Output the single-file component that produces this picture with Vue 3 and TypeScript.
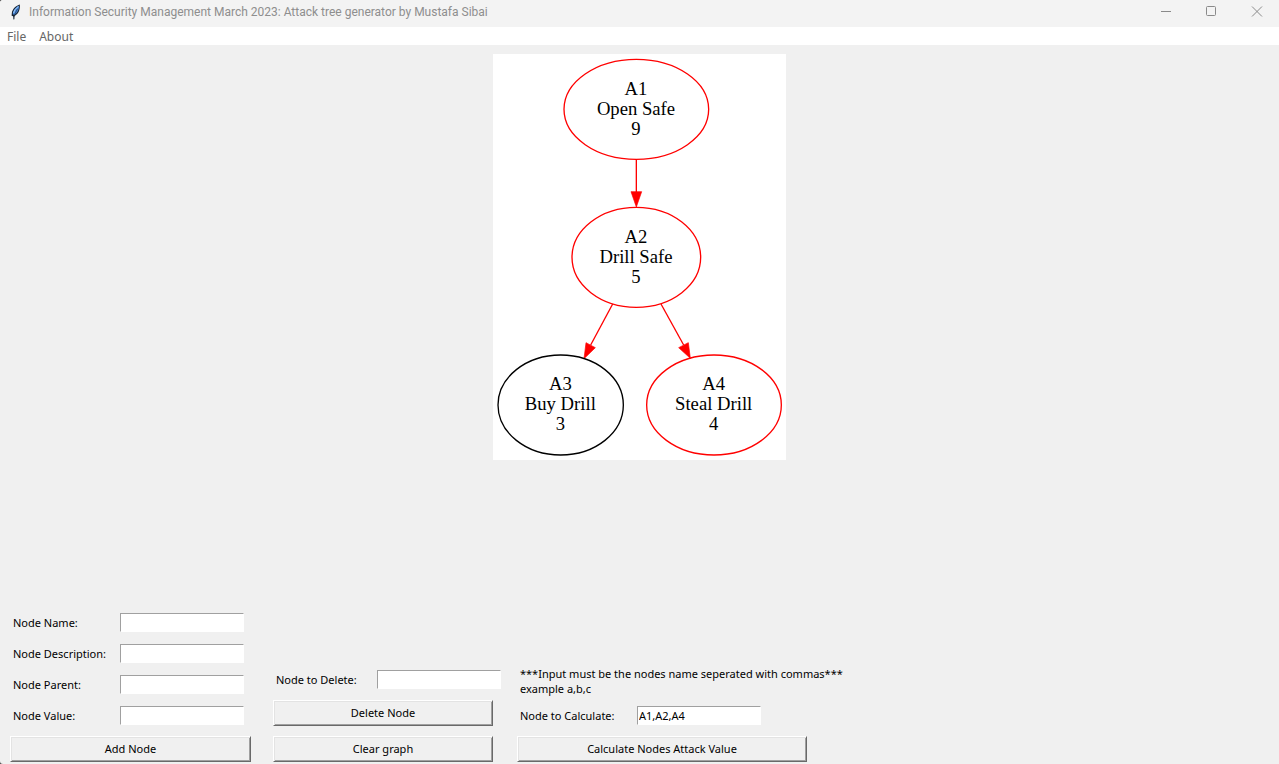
<script setup lang="ts">
import { reactive, ref } from 'vue'

interface TreeNode {
  id: string
  label: string
  value: number
  cx: number
  cy: number
  rx: number
  stroke: string
}

interface Edge {
  line: string
  head: string
}

const title = 'Information Security Management March 2023: Attack tree generator by Mustafa Sibai'

const nodes: TreeNode[] = [
  { id: 'A1', label: 'Open Safe', value: 9, cx: 430, cy: 166, rx: 217, stroke: '#ff0000' },
  { id: 'A2', label: 'Drill Safe', value: 5, cx: 430, cy: 610, rx: 193, stroke: '#ff0000' },
  { id: 'A3', label: 'Buy Drill', value: 3, cx: 203, cy: 1053, rx: 188, stroke: '#000000' },
  { id: 'A4', label: 'Steal Drill', value: 4, cx: 663, cy: 1053, rx: 202, stroke: '#ff0000' },
]

const edges: Edge[] = [
  { line: 'M430 316V414', head: '414,413 446,413 430,459' },
  { line: 'M359 750L293 873', head: '279,866 307,881 273,914' },
  { line: 'M504 750L572 873', head: '557,881 586,866 592,913' },
]

const fields = reactive([
  { id: 'node-name', label: 'Node Name:', value: '' },
  { id: 'node-description', label: 'Node Description:', value: '' },
  { id: 'node-parent', label: 'Node Parent:', value: '' },
  { id: 'node-value', label: 'Node Value:', value: '' },
])
const toDelete = ref('')
const toCalculate = ref('A1,A2,A4')
</script>

<template>
  <div class="window">
    <header class="titlebar">
      <svg class="feather" viewBox="0 0 16 16" aria-hidden="true">
        <path d="M12.8.6C9.3 1.6 5.2 5 4.8 9.2L4.6 11.8L6.2 12.2L6.4 15.4L7.4 15.2L7.5 12C10.9 10.6 13.4 6.5 12.8.6Z" fill="#172434" />
        <path d="M12 1.8C8.8 3.2 6 6.2 5.8 10L7.2 11.1C10 9.1 12.2 5.8 12 1.8Z" fill="#4a8ce0" />
        <path d="M11.3 2.6C9 4.2 7.2 6.4 6.7 9" fill="none" stroke="#a8cdf3" stroke-width="1" />
        <path d="M10.6 4.8Q8.2 8.5 6.8 13" fill="none" stroke="#182130" stroke-width=".6" />
      </svg>
      <h1>{{ title }}</h1>
      <div class="controls">
        <button type="button" aria-label="Minimize">
          <svg viewBox="0 0 12 12"><path d="M0 5.5H10" /></svg>
        </button>
        <button type="button" aria-label="Maximize">
          <svg viewBox="0 0 12 12"><rect x=".5" y=".5" width="9" height="9" rx="1" /></svg>
        </button>
        <button type="button" aria-label="Close">
          <svg viewBox="0 0 12 12"><path d="M1 .5L11 10.5M11 .5L1 10.5" /></svg>
        </button>
      </div>
    </header>

    <nav class="menu">
      <button type="button">File</button>
      <button type="button">About</button>
    </nav>

    <main>
      <svg class="graph" viewBox="0 0 879 1218" role="img" aria-label="Attack tree">
        <g v-for="edge in edges" :key="edge.line" class="edge">
          <path :d="edge.line" />
          <polygon :points="edge.head" />
        </g>
        <g v-for="node in nodes" :key="node.id">
          <ellipse :cx="node.cx" :cy="node.cy" :rx="node.rx" ry="150" :stroke="node.stroke" />
          <text :x="node.cx - 1" :y="node.cy - 44">{{ node.id }}</text>
          <text :x="node.cx - 1" :y="node.cy + 16">{{ node.label }}</text>
          <text :x="node.cx - 1" :y="node.cy + 76">{{ node.value }}</text>
        </g>
      </svg>

      <div class="forms">
        <form class="add" @submit.prevent>
          <div class="rows">
            <div v-for="field in fields" :key="field.id" class="row">
              <label :for="field.id">{{ field.label }}</label>
              <input :id="field.id" v-model="field.value" type="text" />
            </div>
          </div>
          <button class="raised" type="submit">Add Node</button>
        </form>

        <form class="delete" @submit.prevent>
          <div class="rows">
            <div class="row">
              <label for="node-delete">Node to Delete:</label>
              <input id="node-delete" v-model="toDelete" type="text" />
            </div>
          </div>
          <button class="raised" type="submit">Delete Node</button>
          <button class="raised" type="button">Clear graph</button>
        </form>

        <form class="calculate" @submit.prevent>
          <div class="rows">
            <p>***Input must be the nodes name seperated with commas***<br />example a,b,c</p>
            <div class="row">
              <label for="node-calculate">Node to Calculate:</label>
              <input id="node-calculate" v-model="toCalculate" type="text" />
            </div>
          </div>
          <button class="raised" type="submit">Calculate Nodes Attack Value</button>
        </form>
      </div>
    </main>
  </div>
</template>

<style>
body {
  margin: 0;
  background: #4a4a4a;
}
</style>

<style scoped>
.window {
  display: flex;
  flex-direction: column;
  min-height: 100vh;
  background: #f0f0f0;
  border-radius: 3px 0 0 3px;
  color: #000;
  font: 11px/15px "Noto Sans", "Open Sans", sans-serif;
}

.window *,
.window {
  box-sizing: border-box;
}

button,
input {
  font: inherit;
  color: inherit;
  border-radius: 0;
  margin: 0;
}

.titlebar {
  display: flex;
  align-items: center;
  height: 27px;
  padding: 0 0 4px 7px;
  background: #f3f3f3;
  border-radius: 3px 0 0 0;
}

.feather {
  width: 16px;
  height: 16px;
  margin-right: 6px;
}

h1 {
  flex: 1;
  margin: 0;
  font: 12px/17px Roboto, sans-serif;
  padding-top: 2px;
  color: #8e8e8e;
  white-space: nowrap;
}

.controls {
  display: flex;
}

.controls button {
  display: flex;
  align-items: center;
  justify-content: center;
  width: 45px;
  height: 23px;
  padding: 0;
  border: 0;
  background: none;
}

.controls svg {
  width: 12px;
  height: 12px;
  fill: none;
  stroke: #8a8a8a;
  stroke-width: 1;
}

.menu {
  display: flex;
  gap: 13px;
  height: 18px;
  padding: 2px 7px;
  background: #fff;
  color: #666;
  font-size: 12px;
}

.menu button {
  padding: 0;
  border: 0;
  background: none;
  line-height: 15px;
}

main {
  flex: 1;
  display: flex;
  flex-direction: column;
  justify-content: space-between;
  padding: 9px 10px 2px;
}

.graph {
  align-self: center;
  width: 293px;
  background: #fff;
}

.graph ellipse {
  fill: none;
  stroke-width: 4;
}

.graph text {
  font: 56px "Liberation Serif", "Times New Roman", serif;
  text-anchor: middle;
}

.edge path {
  fill: none;
  stroke: #f00;
  stroke-width: 4;
}

.edge polygon {
  fill: #f00;
  stroke: #f00;
  stroke-width: 2;
}

.forms {
  display: flex;
  align-items: flex-end;
}

form,
.rows {
  display: flex;
  flex-direction: column;
  gap: 10px;
}

.rows {
  padding-bottom: 1px;
}

.add {
  width: 241px;
  margin-right: 22px;
}

.add .rows {
  gap: 12px;
}

.delete {
  width: 228px;
  margin-right: 16px;
}

.row {
  display: flex;
  align-items: center;
  padding-left: 3px;
}

.row label {
  width: 107px;
  white-space: nowrap;
}

.delete label {
  width: 101px;
}

.calculate label {
  width: 117px;
}

input {
  width: 124px;
  height: 19px;
  padding: 0 1px;
  border: 1px solid #fff;
  border-top-color: #a0a0a0;
  border-left-color: #a0a0a0;
  background: #fff;
  outline: 0;
}

.raised {
  width: 100%;
  height: 26px;
  padding: 0 0 2px;
  border: 1px solid;
  border-color: #fff #696969 #696969 #fff;
  background: #f0f0f0;
  box-shadow: inset 1px 1px #e3e3e3, inset -1px -1px #a0a0a0;
}

.delete .raised {
  width: 220px;
}

.calculate .raised {
  width: 290px;
}

p {
  margin: 0;
  padding-left: 3px;
  white-space: nowrap;
}
</style>
